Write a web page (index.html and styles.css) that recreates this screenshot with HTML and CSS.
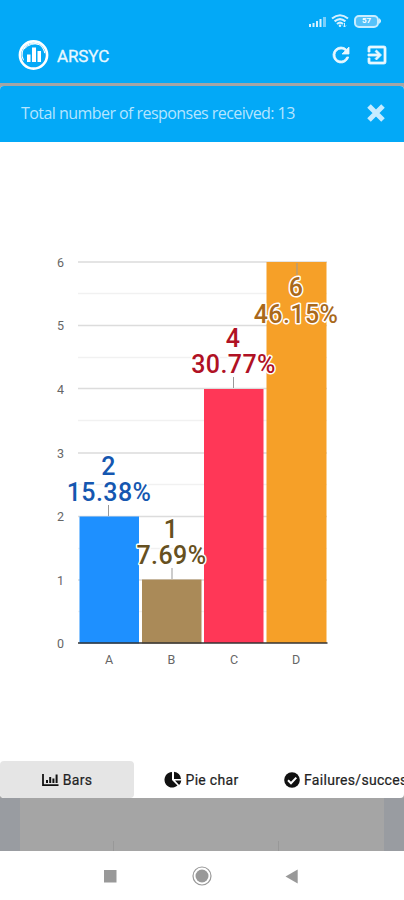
FILE: index.html
```html
<!DOCTYPE html>
<html lang="en">
<head>
  <meta charset="UTF-8" />
  <title>ARSYC</title>
  <meta name="viewport" content="width=device-width, initial-scale=1.0"/>
  <link rel="stylesheet" href="styles.css">
</head>
<body>

<header class="app-header">
  <div class="status-bar">
    <svg class="signal" width="19" height="12" viewBox="0 0 19 12">
      <path d="M1 9h2v3H1zM4.5 8h2v4h-2zM8 6h2v6H8zM11.5 4h2v8h-2z" fill="#d6f1ff"/>
      <path d="M15 2h3v10h-3z" fill="#7ccffa"/>
    </svg>
    <svg class="wifi" width="18" height="14" viewBox="0 0 18 14">
      <g fill="none" stroke="#d6f1ff" stroke-width="2.1">
        <path d="M1 4.5Q9-2 17 4.5M3.6 7.4Q9 2.8 14.4 7.4M6 10Q9 7.4 12 10"/>
      </g>
      <circle cx="9" cy="11.8" r="1.3" fill="#d6f1ff"/>
      <path d="M13.5 9v4M12 11.5l1.5 1.5 1.5-1.5" fill="none" stroke="#d6f1ff"/>
    </svg>
    <span class="battery"><span>57</span></span>
    <svg width="2" height="6" viewBox="0 0 2 6">
      <path d="M0 0l2 2v2L0 6z" fill="#c8edff"/>
    </svg>
  </div>
  <div class="title-bar">
    <svg class="logo" width="32" height="32" viewBox="0 0 32 32">
      <circle cx="15.5" cy="16" r="13.6" fill="none" stroke="#fff" stroke-width="2.6"/>
      <circle cx="16.3" cy="16.6" r="11.4" fill="none" stroke="#fff" stroke-width="1" stroke-dasharray="40 32" transform="rotate(150 16 16)"/>
      <path d="M5 8Q12 0 23 3.5M6 10Q13 3 21 5.5" fill="none" stroke="#fff"/>
      <path d="M9 15.5h3.5V23H9zM14 8.5h4V23h-4zM19.5 12h3.5v11h-3.5z" fill="#fff"/>
    </svg>
    <h1>ARSYC</h1>
    <svg class="refresh" width="24" height="24" viewBox="0 0 24 24">
      <path d="M17.65 6.35A7.96 7.96 0 0 0 12 4a8 8 0 1 0 7.73 10h-2.08A6 6 0 1 1 12 6c1.66 0 3.14.69 4.22 1.78L13 11h7V4z"/>
    </svg>
    <svg class="exit" width="24" height="24" viewBox="0 0 24 24">
      <path d="M10.09 15.59L11.5 17l5-5-5-5-1.41 1.41L12.67 11H3v2h9.67zM19 3H5a2 2 0 0 0-2 2v4h2V5h14v14H5v-4H3v4a2 2 0 0 0 2 2h14a2 2 0 0 0 2-2V5a2 2 0 0 0-2-2z"/>
    </svg>
  </div>
</header>

<section class="modal">
  <div class="modal-header">
    <p>Total number of responses received: 13</p>
    <svg width="20" height="20" viewBox="0 0 20 20">
      <path d="M3 3l14 14M17 3L3 17"/>
    </svg>
  </div>

  <svg class="chart" width="404" height="619" viewBox="0 142 404 619">
    <g class="grid-minor">
      <path d="M78 293.5h249M78 357.5h249M78 420.5h249M78 484.5h249M78 548.5h249M78 611.5h249"/>
    </g>
    <g class="grid">
      <path d="M78 262h249M78 325.5h249M78 388.5h249M78 453h249M78 516.5h249M78 580h249"/>
    </g>
    <g>
      <rect x="79.5" y="516.5" width="59.5" height="127" fill="#1e90ff"/>
      <rect x="142" y="579.5" width="59.5" height="64" fill="#aa8a58"/>
      <rect x="204" y="389" width="59.5" height="254" fill="#ff3757"/>
      <rect x="266.5" y="262" width="60" height="381" fill="#f6a028"/>
    </g>
    <path class="baseline" d="M78 643h249.5"/>
    <path class="stems" d="M108.5 505v11M172 568v11M233.5 377v11M297 263v12"/>
    <g class="axis">
      <text x="60.5" y="266.5">6</text>
      <text x="60.5" y="330">5</text>
      <text x="60.5" y="393.5">4</text>
      <text x="60.5" y="457.5">3</text>
      <text x="60.5" y="521">2</text>
      <text x="60.5" y="584.5">1</text>
      <text x="60.5" y="648">0</text>
      <text x="109" y="663.5">A</text>
      <text x="171.5" y="663.5">B</text>
      <text x="234" y="663.5">C</text>
      <text x="296" y="663.5">D</text>
    </g>
    <g class="values">
      <text x="108.5" y="475" fill="#1557b0">2</text>
      <text x="109" y="500.5" fill="#1557b0">15.38%</text>
      <text x="171" y="538" fill="#665020">1</text>
      <text x="171.5" y="563.5" fill="#665020">7.69%</text>
      <text x="233" y="347" fill="#b01124">4</text>
      <text x="233.5" y="373" fill="#b01124">30.77%</text>
      <text x="296" y="296" fill="#a9681a">6</text>
      <text x="296" y="322.5" fill="#a9681a">46.15%</text>
    </g>
  </svg>

  <nav class="tabs">
    <div class="tab active">
      <svg width="17" height="14" viewBox="0 0 17 14">
        <path d="M1 1v11.2h15.5" fill="none" stroke="#111" stroke-width="1.8"/>
        <path d="M4 7h2v3H4zM7.2 4h2v6h-2zM10.4 5.5h2V10h-2zM13.6 1.5h2V10h-2z" fill="#111"/>
      </svg>
      <span>Bars</span>
    </div>
    <div class="tab">
      <svg width="18" height="17" viewBox="0 0 18 17">
        <path d="M8 1v8l5.5 5.6A7.8 7.8 0 1 1 8 1zM10 .8A7.5 7.5 0 0 1 17 8h-7zM11 9.5h6.3a7 7 0 0 1-2.2 4.4z" fill="#111"/>
      </svg>
      <span>Pie char</span>
    </div>
    <div class="tab wide">
      <svg width="16" height="16" viewBox="0 0 16 16">
        <circle cx="8" cy="8" r="7.8" fill="#111"/>
        <path d="M4 8.2l3 3 5.3-5.6" fill="none" stroke="#fff" stroke-width="2"/>
      </svg>
      <span>Failures/success</span>
    </div>
  </nav>
</section>

<div class="backdrop"><div class="page-card"><div class="page-box"></div></div></div>

<footer class="system-nav">
  <svg width="404" height="49" viewBox="0 0 404 49">
    <rect x="104" y="19" width="12.5" height="12.5" fill="#999"/>
    <circle cx="202" cy="25" r="9" fill="none" stroke="#999" stroke-width="1.2"/>
    <circle cx="202" cy="25" r="6.5" fill="#999"/>
    <path d="M285.5 25.5l12.2-7v14z" fill="#999"/>
  </svg>
</footer>

</body>
</html>
```
FILE: styles.css
```css
* {
  box-sizing: border-box;
}

body {
  font-family: Roboto, sans-serif;
  margin: 0;
  width: 404px;
  height: 900px;
  overflow: hidden;
  background: #a5a5a5;
}

svg {
  display: block;
  flex-shrink: 0;
}

.app-header {
  height: 83px;
  background: #03a9f7;
  padding-top: 14px;
}

.status-bar {
  display: flex;
  align-items: center;
  height: 14px;
  padding-left: 308px;
}

.wifi {
  margin-left: 4px;
}

.battery {
  display: flex;
  align-items: center;
  justify-content: center;
  width: 25px;
  height: 13px;
  margin-left: 5px;
  border: 2px solid #c8edff;
  border-radius: 5px;
  background: #55c2fa;
  color: #fff;
  font-size: 8px;
  font-weight: bold;
  line-height: 8px;
}

.title-bar {
  display: flex;
  align-items: center;
  height: 32px;
  margin-top: 11px;
  padding: 0 15px 0 18px;
}

.title-bar .logo {
  margin-top: -1px;
}

.title-bar h1 {
  flex: 1;
  margin: 1px 0 0 7px;
  color: #e8f8ff;
  font-size: 17px;
  font-weight: 400;
  letter-spacing: -0.1px;
  -webkit-text-stroke: 0.3px #e8f8ff;
}

.title-bar .refresh,
.title-bar .exit {
  fill: #e8f8ff;
  stroke: #e8f8ff;
  stroke-width: 0.8;
}

.title-bar .exit {
  margin-left: 12px;
}

.modal {
  margin-top: 3px;
  height: 712px;
  background: #fff;
  border-radius: 4px;
  overflow: hidden;
}

.modal-header {
  display: flex;
  align-items: center;
  justify-content: space-between;
  height: 56px;
  padding: 0 18px 2px 21px;
  background: #03a9f7;
}

.modal-header p {
  margin: 0;
  color: #b5e5ff;
  font-family: "Open Sans", sans-serif;
  font-size: 16px;
  letter-spacing: -0.55px;
}

.modal-header path {
  stroke: #c5ebff;
  stroke-width: 5;
}

.grid,
.grid-minor {
  stroke: #dcdcdc;
  stroke-width: 1.5;
}

.grid-minor {
  stroke: #f1f1f1;
}

.baseline {
  stroke: #333;
  stroke-width: 1.4;
}

.stems {
  stroke: #999;
}

.axis {
  fill: #666;
  font-size: 12.5px;
  text-anchor: middle;
}

.values {
  font-size: 25px;
  font-weight: 500;
  letter-spacing: 0.4px;
  text-anchor: middle;
  stroke: #fff;
  stroke-width: 3px;
  stroke-linejoin: round;
  paint-order: stroke;
}

.tabs {
  display: flex;
  height: 37px;
}

.tab {
  display: flex;
  align-items: center;
  justify-content: center;
  flex: 0 0 134px;
  gap: 4px;
  border-radius: 4px;
  color: #222;
  font-size: 14px;
  letter-spacing: 0.3px;
  white-space: nowrap;
  -webkit-text-stroke: 0.2px #222;
}

.tab.active {
  background: #e5e5e5;
}

.tab.wide {
  justify-content: flex-start;
  padding-left: 16px;
}

.backdrop {
  height: 53px;
  padding: 0 20px;
  background: #999ca1;
}

.page-card {
  height: 53px;
  padding: 43px 105px 0 93px;
  background: #a5a5a5;
}

.page-box {
  height: 10px;
  border: 1px solid #989898;
  border-width: 0 1px;
}

.system-nav {
  height: 49px;
  background: #fff;
}
```
